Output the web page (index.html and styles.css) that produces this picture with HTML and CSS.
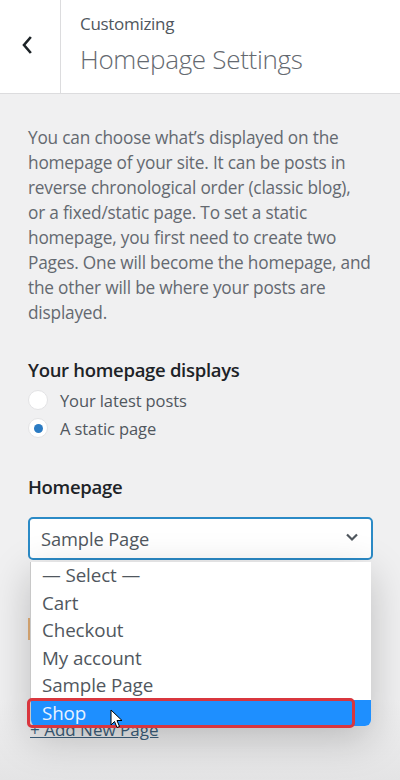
FILE: index.html
```html
<!DOCTYPE html>
<html lang="en">
<head>
<meta charset="utf-8">
<title>Homepage Settings</title>
<link rel="stylesheet" href="styles.css">
</head>
<body>
<div class="panel">
  <header class="head">
    <button class="back" aria-label="Back">
      <svg width="14" height="18" viewBox="0 0 14 18"><path d="M10 2 L4 9 L10 16" fill="none" stroke="#1d2327" stroke-width="2.6" stroke-linecap="square"/></svg>
    </button>
    <div class="titles">
      <span class="crumb">Customizing</span>
      <h1 class="title">Homepage Settings</h1>
    </div>
  </header>
  <main class="content">
    <p class="desc">You can choose what’s displayed on the<br>homepage of your site. It can be posts in<br>reverse chronological order (classic blog),<br>or a fixed/static page. To set a static<br>homepage, you first need to create two<br>Pages. One will become the homepage, and<br>the other will be where your posts are<br>displayed.</p>
    <h2 class="label">Your homepage displays</h2>
    <div class="radios">
      <label class="radio"><span class="dot"></span>Your latest posts</label>
      <label class="radio"><span class="dot on"></span>A static page</label>
    </div>
    <h2 class="label label-home">Homepage</h2>
    <div class="field">
      <div class="select">
        <span>Sample Page</span>
        <svg width="14" height="10" viewBox="0 0 14 10"><path d="M2 2.5 L7 7.5 L12 2.5" fill="none" stroke="#50575e" stroke-width="2.2"/></svg>
      </div>
      <div class="notice"></div>
      <a class="add" href="#">+ Add New Page</a>
      <ul class="menu">
        <li>— Select —</li>
        <li>Cart</li>
        <li>Checkout</li>
        <li>My account</li>
        <li>Sample Page</li>
        <li class="hl">Shop</li>
      </ul>
      <div class="mark"></div>
      <svg class="cursor" width="14" height="20" viewBox="0 0 14 20"><path d="M1 1 L1 16 L4.5 12.5 L7 18.5 L9.5 17.5 L7 11.5 L12 11.5 Z" fill="#fff" stroke="#000" stroke-width="1"/></svg>
    </div>
  </main>
</div>
</body>
</html>
```
FILE: styles.css
```css
* { box-sizing: border-box; }
html, body { margin: 0; padding: 0; }
body {
  width: 400px;
  height: 780px;
  overflow: hidden;
  background: #f0f0f1;
  font-family: "Open Sans", "Noto Sans", sans-serif;
  color: #50575e;
}
.panel { width: 400px; height: 780px; background: linear-gradient(#f0f0f1 0, #f0f0f1 700px, #e4e4e5 780px); }
.head {
  display: flex;
  height: 94px;
  background: #fff;
  border-bottom: 1px solid #dcdcde;
}
.back {
  width: 61px;
  border: 0;
  border-right: 1px solid #dcdcde;
  background: #fff;
  display: flex;
  align-items: center;
  justify-content: center;
  padding: 0 6px 4px 0;
}
.titles {
  display: flex;
  flex-direction: column;
  padding: 13px 0 0 19px;
}
.crumb { font-size: 17px; line-height: 22px; color: #50575e; letter-spacing: -0.3px; }
.title {
  margin: 8px 0 0;
  font-size: 26px;
  font-weight: 300;
  line-height: 32px;
  color: #646970;
  letter-spacing: -0.3px;
}
.content { padding: 0 27px 0 28px; }
.desc {
  margin: 31px -20px 0 0;
  font-size: 17.25px;
  line-height: 25px;
  color: #646970;
  letter-spacing: -0.2px;
  white-space: nowrap;
}
.label {
  margin: 33px 0 0;
  font-size: 18.5px;
  line-height: 24px;
  font-weight: 600;
  color: #1d2327;
  letter-spacing: -0.3px;
}
.radios { margin-top: 4px; }
.radio {
  display: flex;
  align-items: center;
  gap: 12px;
  height: 28px;
  font-size: 16.5px;
  color: #50575e;
  letter-spacing: -0.1px;
}
.dot {
  width: 20px;
  height: 20px;
  border-radius: 50%;
  background: #fff;
  border: 1px solid #e3e3e5;
  display: flex;
  align-items: center;
  justify-content: center;
}
.dot.on::after {
  content: "";
  width: 9px;
  height: 9px;
  border-radius: 50%;
  background: #2b7bc3;
}
.label-home { margin-top: 33px; }
.field { position: relative; margin-top: 18px; }
.select {
  height: 43px;
  border: 2px solid #2b8ac6;
  border-radius: 5px;
  background: #fff;
  display: flex;
  align-items: center;
  justify-content: space-between;
  padding: 0 12px 0 11px;
  font-size: 18.3px;
  color: #50575e;
  letter-spacing: -0.1px;
}
.select svg { margin-top: -3px; }
.notice {
  height: 22px;
  width: 3px;
  margin-top: 58px;
  background: #e6b27a;
}
.add {
  display: inline-block;
  margin-top: 80px;
  margin-left: 2px;
  font-size: 17px;
  line-height: 20px;
  color: #3c5e7a;
  text-decoration: underline;
}
.menu {
  position: absolute;
  left: 2px;
  top: 45px;
  width: 341px;
  margin: 0;
  padding: 0;
  list-style: none;
  background: #fff;
  border-left: 1px solid #c8c8c8;
  border-radius: 0 0 6px 6px;
  box-shadow: 0 12px 40px rgba(0,0,0,0.22);
  overflow: hidden;
}
.menu li {
  height: 27.5px;
  line-height: 27.5px;
  padding-left: 11px;
  font-size: 18.8px;
  color: #50575e;
  letter-spacing: -0.1px;
}
.menu li.hl {
  background: #1e8fff;
  color: #e8f2ff;
  height: 26px;
}
.mark {
  position: absolute;
  left: -1px;
  top: 181px;
  width: 328px;
  height: 30px;
  border: 3px solid #d9363e;
  border-radius: 5px;
}
.cursor { position: absolute; left: 82px; top: 192px; }
```
